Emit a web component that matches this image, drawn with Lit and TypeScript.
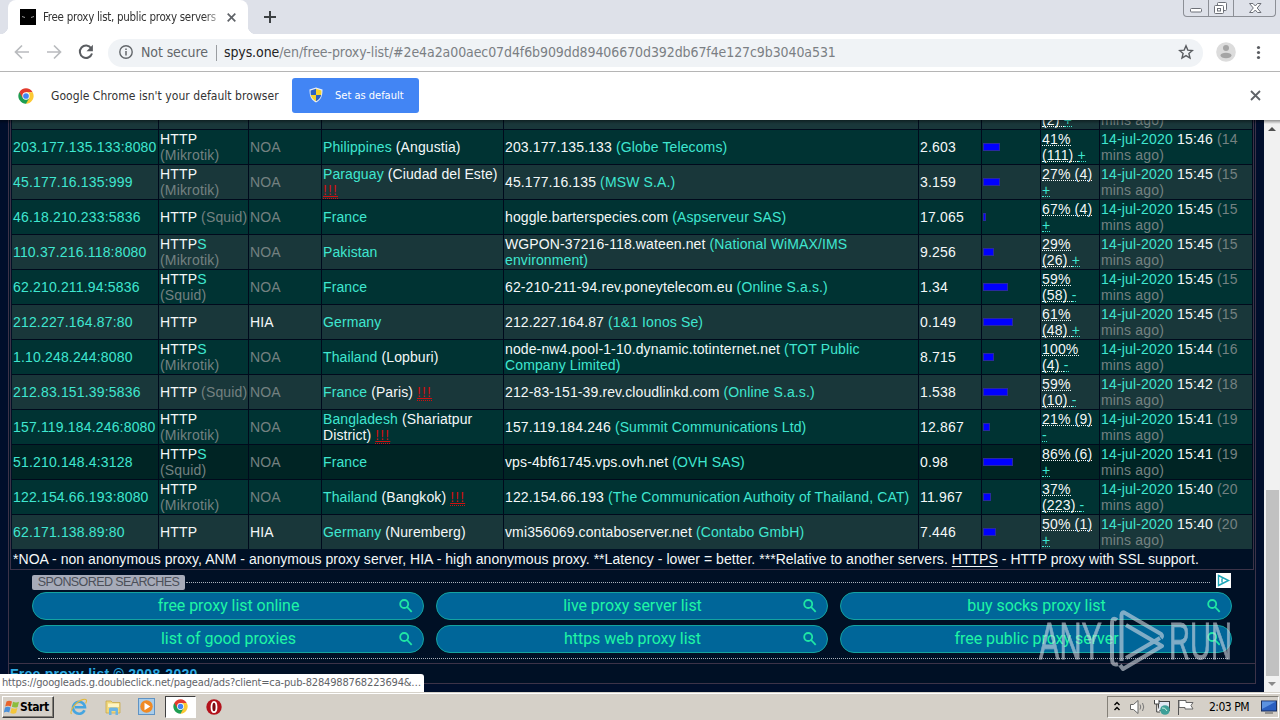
import { LitElement, html, css, svg } from 'lit';
import { customElement, property } from 'lit/decorators.js';
import { styleMap } from 'lit/directives/style-map.js';

type Tone = 'link' | 'text' | 'dim' | 'warn';
type Part = [Tone, string];
type Line = Part[];

interface Proxy {
  shade: 'a' | 'b' | 'c';
  address: string;
  type: Line[];
  anonymity: string;
  country: Line[];
  host: Line[];
  latency: string;
  speed: number;
  uptime: Line[];
  time: string;
  ago: number;
}

const http = (server?: string): Line[] =>
  server ? [[['text', 'HTTP']], [['dim', `(${server})`]]] : [[['text', 'HTTP']]];
const https = (server: string): Line[] => [[['text', 'HTTP'], ['link', 'S']], [['dim', `(${server})`]]];
const squid: Line[] = [[['text', 'HTTP '], ['dim', '(Squid)']]];

const proxies: Proxy[] = [
  {
    shade: 'a', address: '203.177.135.133:8080', type: http('Mikrotik'), anonymity: 'NOA',
    country: [[['link', 'Philippines '], ['text', '(Angustia)']]],
    host: [[['text', '203.177.135.133 '], ['link', '(Globe Telecoms)']]],
    latency: '2.603', speed: 17, uptime: [[['text', '41%']], [['text', '(111) '], ['link', '+']]], time: '15:46', ago: 14,
  },
  {
    shade: 'b', address: '45.177.16.135:999', type: http('Mikrotik'), anonymity: 'NOA',
    country: [[['link', 'Paraguay '], ['text', '(Ciudad del Este)']], [['warn', '!!!']]],
    host: [[['text', '45.177.16.135 '], ['link', '(MSW S.A.)']]],
    latency: '3.159', speed: 17, uptime: [[['text', '27% (4)']], [['link', '+']]], time: '15:45', ago: 15,
  },
  {
    shade: 'a', address: '46.18.210.233:5836', type: squid, anonymity: 'NOA',
    country: [[['link', 'France']]],
    host: [[['text', 'hoggle.barterspecies.com '], ['link', '(Aspserveur SAS)']]],
    latency: '17.065', speed: 3, uptime: [[['text', '67% (4)']], [['link', '+']]], time: '15:45', ago: 15,
  },
  {
    shade: 'b', address: '110.37.216.118:8080', type: https('Mikrotik'), anonymity: 'NOA',
    country: [[['link', 'Pakistan']]],
    host: [[['text', 'WGPON-37216-118.wateen.net '], ['link', '(National WiMAX/IMS']], [['link', 'environment)']]],
    latency: '9.256', speed: 11, uptime: [[['text', '29%']], [['text', '(26) '], ['link', '+']]], time: '15:45', ago: 15,
  },
  {
    shade: 'a', address: '62.210.211.94:5836', type: https('Squid'), anonymity: 'NOA',
    country: [[['link', 'France']]],
    host: [[['text', '62-210-211-94.rev.poneytelecom.eu '], ['link', '(Online S.a.s.)']]],
    latency: '1.34', speed: 25, uptime: [[['text', '59%']], [['text', '(58) '], ['link', '-']]], time: '15:45', ago: 15,
  },
  {
    shade: 'b', address: '212.227.164.87:80', type: http(), anonymity: 'HIA',
    country: [[['link', 'Germany']]],
    host: [[['text', '212.227.164.87 '], ['link', '(1&1 Ionos Se)']]],
    latency: '0.149', speed: 30, uptime: [[['text', '61%']], [['text', '(48) '], ['link', '+']]], time: '15:45', ago: 15,
  },
  {
    shade: 'a', address: '1.10.248.244:8080', type: https('Mikrotik'), anonymity: 'NOA',
    country: [[['link', 'Thailand '], ['text', '(Lopburi)']]],
    host: [[['text', 'node-nw4.pool-1-10.dynamic.totinternet.net '], ['link', '(TOT Public']], [['link', 'Company Limited)']]],
    latency: '8.715', speed: 11, uptime: [[['text', '100%']], [['text', '(4) '], ['link', '-']]], time: '15:44', ago: 16,
  },
  {
    shade: 'b', address: '212.83.151.39:5836', type: squid, anonymity: 'NOA',
    country: [[['link', 'France '], ['text', '(Paris) '], ['warn', '!!!']]],
    host: [[['text', '212-83-151-39.rev.cloudlinkd.com '], ['link', '(Online S.a.s.)']]],
    latency: '1.538', speed: 25, uptime: [[['text', '59%']], [['text', '(10) '], ['link', '-']]], time: '15:42', ago: 18,
  },
  {
    shade: 'a', address: '157.119.184.246:8080', type: http('Mikrotik'), anonymity: 'NOA',
    country: [[['link', 'Bangladesh '], ['text', '(Shariatpur']], [['text', 'District) '], ['warn', '!!!']]],
    host: [[['text', '157.119.184.246 '], ['link', '(Summit Communications Ltd)']]],
    latency: '12.867', speed: 7, uptime: [[['text', '21% (9)']], [['link', '-']]], time: '15:41', ago: 19,
  },
  {
    shade: 'c', address: '51.210.148.4:3128', type: https('Squid'), anonymity: 'NOA',
    country: [[['link', 'France']]],
    host: [[['text', 'vps-4bf61745.vps.ovh.net '], ['link', '(OVH SAS)']]],
    latency: '0.98', speed: 30, uptime: [[['text', '86% (6)']], [['link', '+']]], time: '15:41', ago: 19,
  },
  {
    shade: 'a', address: '122.154.66.193:8080', type: http('Mikrotik'), anonymity: 'NOA',
    country: [[['link', 'Thailand '], ['text', '(Bangkok) '], ['warn', '!!!']]],
    host: [[['text', '122.154.66.193 '], ['link', '(The Communication Authoity of Thailand, CAT)']]],
    latency: '11.967', speed: 8, uptime: [[['text', '37%']], [['text', '(223) '], ['link', '-']]], time: '15:40', ago: 20,
  },
  {
    shade: 'b', address: '62.171.138.89:80', type: http(), anonymity: 'HIA',
    country: [[['link', 'Germany '], ['text', '(Nuremberg)']]],
    host: [[['text', 'vmi356069.contaboserver.net '], ['link', '(Contabo GmbH)']]],
    latency: '7.446', speed: 13, uptime: [[['text', '50% (1)']], [['link', '+']]], time: '15:40', ago: 20,
  },
];

const searches = [
  'free proxy list online',
  'live proxy server list',
  'buy socks proxy list',
  'list of good proxies',
  'https web proxy list',
  'free public proxy server',
];

const chromeLogo = html`
  <svg class="chrome-logo" viewBox="0 0 48 48">
    <circle cx="24" cy="24" r="23" fill="#fff"/>
    <path d="M24 24 4.1 12.5A23 23 0 0 1 43.9 12.5H24Z" fill="#e33b2e"/>
    <path d="M24 24 43.9 12.5A23 23 0 0 1 24 47Z" fill="#fcc934"/>
    <path d="M24 24 24 47A23 23 0 0 1 4.1 12.5Z" fill="#1e9e52"/>
    <path d="M24 12.5H43.9L34 29.7Z" fill="#fcc934"/>
    <path d="M14 29.7 4.1 12.5 24 13Z" fill="#e33b2e"/>
    <path d="M34 29.7 24 47 14 29.7Z" fill="#1e9e52"/>
    <circle cx="24" cy="24" r="11" fill="#fff"/>
    <circle cx="24" cy="24" r="8.6" fill="#4285f4"/>
  </svg>`;

@customElement('browser-chrome')
export class BrowserChrome extends LitElement {
  static styles = css`
    :host {
      display: block;
      height: 120px;
      background: #fff;
      font-family: "DejaVu Sans Condensed", "Noto Sans", sans-serif;
      color: #333;
    }
    svg {
      display: block;
      flex: none;
    }
    .strip {
      display: flex;
      height: 34px;
      padding-left: 8px;
      background: #dee1e9;
    }
    .tab {
      display: flex;
      align-items: center;
      box-sizing: border-box;
      width: 240px;
      padding: 0 10px 0 12px;
      border-radius: 8px 8px 0 0;
      background: #fff;
      position: relative;
    }
    .tab::before,
    .tab::after {
      content: "";
      position: absolute;
      bottom: 0;
      width: 8px;
      height: 8px;
    }
    .tab::before {
      left: -8px;
      background: radial-gradient(circle at 0 0, transparent 8px, #fff 8.5px);
    }
    .tab::after {
      right: -8px;
      background: radial-gradient(circle at 100% 0, transparent 8px, #fff 8.5px);
    }
    .title {
      width: 175px;
      margin: 0 9px 0 7px;
      overflow: hidden;
      white-space: nowrap;
      font-size: 11.5px;
      letter-spacing: -0.29px;
      -webkit-mask-image: linear-gradient(90deg, #000 92%, rgba(0, 0, 0, 0.3));
    }
    .plus {
      margin: 11px 0 0 16px;
    }
    .window-buttons {
      display: flex;
      box-sizing: border-box;
      width: 93px;
      height: 17px;
      margin: 0 4px 0 auto;
      border: 1px solid #8c8f96;
      border-top: 0;
      border-radius: 0 0 4px 4px;
    }
    .toolbar {
      display: flex;
      align-items: center;
      box-sizing: border-box;
      height: 38px;
      padding-left: 13px;
      border-bottom: 1px solid #b5b5b5;
    }
    .nav {
      display: flex;
      gap: 14px;
      margin-right: 13px;
      margin-bottom: 1px;
    }
    .omnibox {
      display: flex;
      align-items: center;
      box-sizing: border-box;
      width: 1095px;
      height: 28px;
      padding: 0 9px 0 10px;
      border-radius: 14px;
      background: #f0f3f6;
      font-size: 14px;
      color: #7b7f84;
      white-space: nowrap;
    }
    .omnibox > * {
      margin-bottom: 2px;
    }
    .secure {
      margin-left: 7px;
      letter-spacing: -0.1px;
      color: #63676b;
    }
    .divider {
      width: 1px;
      height: 16px;
      margin: 0 7px 0 8px;
      background: #9a9da1;
    }
    .url {
      letter-spacing: -0.09px;
    }
    .domain {
      color: #222;
    }
    .star {
      margin-left: auto;
    }
    .infobar {
      display: flex;
      align-items: center;
      height: 48px;
      padding-left: 18px;
      font-size: 12px;
    }
    .infobar .chrome-logo {
      width: 16px;
      height: 16px;
    }
    .message {
      width: 241px;
      margin-left: 17px;
      letter-spacing: 0.05px;
      white-space: nowrap;
    }
    .default {
      display: flex;
      align-items: center;
      box-sizing: border-box;
      width: 127px;
      height: 35px;
      margin-bottom: 2px;
      padding-left: 16px;
      gap: 11px;
      border-radius: 3px;
      background: #4285f4;
      color: #fff;
      font-size: 11px;
      white-space: nowrap;
    }
    .close {
      margin: 0 19px 1px auto;
    }
  `;

  render() {
    return html`
      <div class="strip">
        <div class="tab">
          <svg width="16" height="16" viewBox="0 0 16 16">
            <rect width="16" height="16" fill="#000"/>
            <path d="M2 7.5 5 8.5M14 7.5 11 8.5" stroke="#999" fill="none"/>
          </svg>
          <span class="title">Free proxy list, public proxy servers</span>
          <svg width="9" height="9" viewBox="0 0 9 9"><path d="M.7.7 8.3 8.3M8.3.7.7 8.3" stroke="#5f6368" stroke-width="1.7"/></svg>
        </div>
        <svg class="plus" width="12" height="12" viewBox="0 0 12 12"><path d="M6 0V12M0 6H12" stroke="#3c4043" stroke-width="2"/></svg>
        <div class="window-buttons">
          <svg width="91" height="16" viewBox="0 0 91 16" fill="none" stroke="#6d7078">
            <path d="M24.5 0V16M49.5 0V16" stroke="#8c8f96"/>
            <rect x="6.5" y="8.5" width="11" height="3.5" rx="1" fill="#fff"/>
            <rect x="33.5" y="2.5" width="9" height="8" rx="1" fill="#fff"/>
            <rect x="30.5" y="5.5" width="9" height="8" rx="1" fill="#fff"/>
            <rect x="33.5" y="8.5" width="3" height="2.5"/>
            <path d="M65.5 3.5H69L71.3 6 73.5 3.5H77L73.2 8 77 12.5H73.5L71.3 10 69 12.5H65.5L69.3 8Z" fill="#fff"/>
          </svg>
        </div>
      </div>
      <div class="toolbar">
        <div class="nav">
          <svg width="18" height="18" viewBox="0 0 18 18" fill="none" stroke="#b9bbbe" stroke-width="1.7"><path d="M16 9H3M9 2.5 2.5 9 9 15.5"/></svg>
          <svg width="18" height="18" viewBox="0 0 18 18" fill="none" stroke="#b9bbbe" stroke-width="1.7"><path d="M2 9H15M9 2.5 15.5 9 9 15.5"/></svg>
          <svg width="18" height="18" viewBox="0 0 18 18">
            <path d="M14.2 5.2A6.2 6.2 0 1 0 15 10.5" fill="none" stroke="#5a5d61" stroke-width="2"/>
            <path d="M15.9 1.8V8.2H9.5Z" fill="#5a5d61"/>
          </svg>
        </div>
        <div class="omnibox">
          <svg width="16" height="16" viewBox="0 0 16 16">
            <circle cx="8" cy="8" r="6.2" fill="none" stroke="#63676b" stroke-width="1.4"/>
            <path d="M8 7V11.5M8 4.5V6" stroke="#63676b" stroke-width="1.5"/>
          </svg>
          <span class="secure">Not secure</span>
          <span class="divider"></span>
          <span class="url"><span class="domain">spys.one</span>/en/free-proxy-list/#2e4a2a00aec07d4f6b909dd89406670d392db67f4e127c9b3040a531</span>
          <svg class="star" width="16" height="16" viewBox="0 0 16 16"><path d="M8 1.8 9.8 6.1 14.4 6.5 10.9 9.5 12 14 8 11.6 4 14 5.1 9.5 1.6 6.5 6.2 6.1Z" fill="none" stroke="#5a5d61" stroke-width="1.4"/></svg>
        </div>
        <svg width="77" height="26" viewBox="0 0 77 26">
          <circle cx="23" cy="12" r="9.8" fill="#dcdcdc"/>
          <circle cx="23" cy="8" r="3" fill="#a5a5a5"/>
          <ellipse cx="23" cy="15.5" rx="5.5" ry="2.7" fill="#a5a5a5"/>
          <g fill="#5a5d61"><circle cx="55.5" cy="7.5" r="1.6"/><circle cx="55.5" cy="12.5" r="1.6"/><circle cx="55.5" cy="17.5" r="1.6"/></g>
        </svg>
      </div>
      <div class="infobar">
        ${chromeLogo}
        <span class="message">Google Chrome isn't your default browser</span>
        <div class="default">
          <svg width="16" height="16" viewBox="0 0 16 16">
            <path d="M8 .5 14.5 2.5C14.5 9 13 13 8 15.5 3 13 1.5 9 1.5 2.5Z" fill="#e8eef8"/>
            <path d="M8 1.8V8H2.8Q2.5 5.5 2.6 3.4Z" fill="#2b62c4"/>
            <path d="M8 1.8 13.4 3.4Q13.5 6 13.1 8H8Z" fill="#f6d32c"/>
            <path d="M2.8 8H8V14.3Q3.7 12 2.8 8Z" fill="#f6d32c"/>
            <path d="M13.2 8H8V14.3Q12.3 12 13.2 8Z" fill="#2b62c4"/>
          </svg>
          <span>Set as default</span>
        </div>
        <svg class="close" width="11" height="11" viewBox="0 0 11 11"><path d="M1 1 10 10M10 1 1 10" stroke="#5f6368" stroke-width="1.8"/></svg>
      </div>
    `;
  }
}

@customElement('proxy-row')
export class ProxyRow extends LitElement {
  static properties = {
    proxy: { attribute: false },
  };

  declare proxy: Proxy;

  static styles = css`
    :host {
      display: grid;
      grid-template-columns: 146px 89px 72px 181px 414px 62px 58px 58px 152px;
      gap: 1px;
      height: 34px;
      margin-bottom: 1px;
      line-height: 16px;
      letter-spacing: 0.17px;
      white-space: nowrap;
    }
    .cell {
      display: flex;
      flex-direction: column;
      justify-content: center;
      padding-left: 1px;
      white-space: pre;
    }
    .country {
      letter-spacing: 0.1px;
    }
    .host {
      letter-spacing: 0.12px;
    }
    .a { background: #003333; }
    .b { background: #19373a; }
    .c { background: #002424; }
    .link { color: #3fe6d0; }
    .text { color: #f4f8f8; }
    .dim { color: #748181; }
    .warn {
      color: #d01010;
      border-bottom: 1px dotted #d01010;
      text-decoration: underline;
      line-height: 13px;
      letter-spacing: 1.1px;
    }
    .uptime .link,
    .uptime .text {
      display: inline-block;
      height: 14px;
      border-bottom: 1px dotted;
    }
    .bar {
      box-sizing: border-box;
      height: 8px;
      border: 1px solid #2a2a9e;
      background: #0000ff;
    }
  `;

  private lines(lines: Line[]) {
    return lines.map(
      line => html`<div>${line.map(([tone, text]) => html`<span class=${tone}>${text}</span>`)}</div>`
    );
  }

  render() {
    const p = this.proxy;
    return html`
      <div class="cell ${p.shade}"><span class="link">${p.address}</span></div>
      <div class="cell ${p.shade}">${this.lines(p.type)}</div>
      <div class="cell ${p.shade}"><span class=${p.anonymity === 'HIA' ? 'text' : 'dim'}>${p.anonymity}</span></div>
      <div class="cell country ${p.shade}">${this.lines(p.country)}</div>
      <div class="cell host ${p.shade}">${this.lines(p.host)}</div>
      <div class="cell ${p.shade}"><span class="text">${p.latency}</span></div>
      <div class="cell ${p.shade}">${p.speed
        ? html`<div class="bar" style=${styleMap({ width: `${p.speed}px` })}></div>`
        : ''}</div>
      <div class="cell uptime ${p.shade}">${this.lines(p.uptime)}</div>
      <div class="cell ${p.shade}">${this.lines([
        [['link', '14-jul-2020 '], ['text', p.time], ['dim', ` (${p.ago}`]],
        [['dim', 'mins ago)']],
      ])}</div>
    `;
  }
}

@customElement('sponsored-searches')
export class SponsoredSearches extends LitElement {
  static styles = css`
    :host {
      display: block;
      width: 1200px;
      margin-left: 23px;
    }
    .head {
      display: flex;
      align-items: center;
      width: 1199px;
      height: 18px;
      margin-bottom: 2px;
    }
    .label {
      width: 153px;
      height: 15px;
      margin-top: 2px;
      border-radius: 2px;
      background: #a6abb9;
      color: #4b4f58;
      font-size: 12.5px;
      letter-spacing: -0.6px;
      line-height: 15px;
      text-align: center;
      white-space: nowrap;
    }
    .head svg {
      display: block;
      margin-bottom: 2px;
    }
    .dots {
      flex: 1;
      margin: 2px 6px 0 1px;
      border-top: 1px dotted #a9b2bd;
    }
    .grid {
      display: grid;
      grid-template-columns: repeat(3, 392px);
      gap: 5px 12px;
    }
    .search {
      display: flex;
      align-items: center;
      box-sizing: border-box;
      height: 28px;
      padding: 0 9px 0 0;
      border: 1px solid #14a3a0;
      border-radius: 14px;
      background: #006699;
      color: #1ff5a5;
      font-family: Roboto, sans-serif;
      font-size: 16px;
      letter-spacing: -0.05px;
    }
    .search span {
      flex: 1;
      margin-bottom: 1px;
      padding-left: 26px;
      text-align: center;
    }
    .end {
      margin: 5px 4px 0 6px;
      border-top: 1px dotted #a9b2bd;
    }
  `;

  render() {
    return html`
      <div class="head">
        <div class="label">SPONSORED SEARCHES</div>
        <div class="dots"></div>
        <svg width="15" height="15" viewBox="0 0 15 15">
          <rect width="15" height="15" fill="#fff"/>
          <path d="M2.5 2.5 12.5 7.5 2.5 12.5ZM6 5.5V9.5" fill="none" stroke="#1aa5b8" stroke-width="1.4"/>
        </svg>
      </div>
      <div class="grid">
        ${searches.map(
          text => html`<div class="search"><span>${text}</span>
            <svg width="16" height="16" viewBox="0 0 16 16" fill="none" stroke="#1fe6a5" stroke-width="1.8">
              <circle cx="6.2" cy="6" r="4"/><path d="M9.1 9 13.7 13.8"/>
            </svg></div>`
        )}
      </div>
      <div class="end"></div>
    `;
  }
}

@customElement('task-bar')
export class TaskBar extends LitElement {
  static styles = css`
    :host {
      display: flex;
      align-items: center;
      box-sizing: border-box;
      height: 28px;
      padding: 0 1px 0 2px;
      border-top: 1px solid #d6d2ca;
      background: #d5d0c8;
      box-shadow: inset 0 1px #fff;
      font-family: "DejaVu Sans Condensed", sans-serif;
      font-size: 12px;
      color: #000;
    }
    svg {
      display: block;
      flex: none;
    }
    .start {
      display: flex;
      align-items: center;
      box-sizing: border-box;
      width: 52px;
      height: 22px;
      padding-left: 1px;
      border: 1px solid;
      border-color: #fff #404040 #404040 #fff;
      box-shadow: inset -1px -1px #848078;
      font-weight: bold;
      letter-spacing: -0.4px;
    }
    .quick {
      display: flex;
      align-items: center;
      margin-left: 16px;
      gap: 15px;
    }
    .active {
      display: flex;
      align-items: center;
      justify-content: center;
      box-sizing: border-box;
      width: 31px;
      height: 22px;
      margin: 0 -5px;
      border: 1px solid;
      border-color: #404040 #fff #fff #404040;
      background: #fff;
    }
    .chrome-logo {
      width: 15px;
      height: 15px;
    }
    .tray {
      display: flex;
      align-items: center;
      box-sizing: border-box;
      width: 172px;
      height: 22px;
      margin-left: auto;
      padding: 0 1px 0 5px;
      border: 1px solid;
      border-color: #848078 #fff #fff #848078;
    }
    .clock {
      margin-left: 14px;
      letter-spacing: -0.5px;
      white-space: nowrap;
    }
    .desktop {
      margin-left: auto;
    }
  `;

  render() {
    return html`
      <div class="start">
        <svg width="16" height="16" viewBox="0 0 16 16">
          <path d="M2.5 2.5Q5 .8 8 2.5L6.8 7.5Q4 6 1.2 7.5Z" fill="#e8642c"/>
          <path d="M9 2.8Q12 4.3 15 2.8L13.7 8Q11 9.3 7.9 7.8Z" fill="#8bbd3d"/>
          <path d="M1 8.5Q3.8 7 6.5 8.5L5.2 13.5Q2.5 12-.2 13.5Z" fill="#4a90d9"/>
          <path d="M7.6 8.9Q10.5 10.3 13.4 9L12.1 14Q9.2 15.3 6.3 13.9Z" fill="#f4c63a"/>
        </svg>
        <span>Start</span>
      </div>
      <div class="quick">
        <svg width="18" height="18" viewBox="0 0 18 18">
          <path d="M14.5 12.2A6 6 0 1 1 15 9.3H5" fill="none" stroke="#45a5e0" stroke-width="2.6"/>
          <path d="M1.5 16C-1 13 6 3.5 12.5 1.6 16.5.5 17.5 2 15.6 5.5" fill="none" stroke="#e2b93c" stroke-width="1.1"/>
        </svg>
        <svg width="20" height="18" viewBox="0 0 20 18">
          <path d="M3 3H8L9.5 4.5H17V15H3Z" fill="#f0d77c" stroke="#c9a94b" stroke-width=".8"/>
          <path d="M5 5.5H16V9H5Z" fill="#fff4c2"/>
          <path d="M6 17V11Q6 9.5 7.5 9.5H13.5Q15 9.5 15 11V17H12.5V13H8.5V17Z" fill="#6bb4e4"/>
        </svg>
        <svg width="17" height="17" viewBox="0 0 17 17">
          <rect x=".5" y=".5" width="16" height="16" fill="#a9cdea" stroke="#5f93c4"/>
          <circle cx="8.5" cy="8.5" r="6.2" fill="#f08a24"/>
          <path d="M6.5 4.8 12.3 8.5 6.5 12.2Z" fill="#fff"/>
        </svg>
        <div class="active">${chromeLogo}</div>
        <svg width="16" height="16" viewBox="0 0 16 16">
          <circle cx="8" cy="8" r="7.7" fill="#b3121c"/>
          <ellipse cx="8" cy="8" rx="2.5" ry="5.2" fill="#7d0810" stroke="#fff" stroke-width="1.8"/>
        </svg>
      </div>
      <div class="tray">
        <svg width="82" height="18" viewBox="0 0 82 18" fill="none">
          <path d="M1.5 7 4 4.5 6.5 7M1.5 12 4 9.5 6.5 12" stroke="#000" stroke-width="1.4"/>
          <path d="M17.5 6.5H20.5L25 2.5V15.5L20.5 11.5H17.5Z" fill="#fff" stroke="#666"/>
          <path d="M27 6.5Q28.5 9 27 11.5M29.5 5Q32 9 29.5 13" stroke="#777"/>
          <rect x="45.5" y="3.5" width="11" height="9" fill="#dfe8f2" stroke="#444"/>
          <circle cx="52" cy="12" r="4.8" fill="#3d9f98"/><path d="M49 10Q52 9 54 13" stroke="#c9f0dc"/>
          <path d="M41.5 2V6H46V2M43.7 6V14H47" stroke="#444" fill="#fff"/>
          <path d="M65.5 2V17" stroke="#555"/>
          <path d="M66 2.5H73V4.5H80L78 7.5 80 11H72V9.5H66Z" fill="#fff" stroke="#666"/>
        </svg>
        <span class="clock">2:03 PM</span>
        <svg class="desktop" width="16" height="18" viewBox="0 0 16 18">
          <rect x=".5" y="3" width="15" height="10" fill="#2a5fc0" stroke="#1b2f5c"/>
          <path d="M1 3.5H15L1 11Z" fill="#5c92e0"/>
          <path d="M4 15H12" stroke="#555"/>
        </svg>
      </div>
    `;
  }
}

@customElement('app-root')
export class AppRoot extends LitElement {
  static styles = css`
    :host {
      display: block;
      position: relative;
      width: 1280px;
      height: 720px;
      overflow: hidden;
      font-family: "Liberation Sans", Arial, sans-serif;
      font-size: 14px;
    }
    .viewport {
      display: flex;
      height: 572px;
      position: relative;
      overflow: hidden;
      background: #000e2b;
    }
    .viewport::before {
      content: "";
      position: absolute;
      left: 0;
      right: 0;
      top: 0;
      height: 4px;
      background: linear-gradient(rgba(0, 0, 0, 0.4), transparent);
    }
    .page {
      box-sizing: border-box;
      width: 1248px;
      height: 564px;
      margin: 0 8px;
      border: 1px solid #3c3348;
      border-top: 0;
      background: #001025;
    }
    .table {
      box-sizing: border-box;
      height: 450px;
      margin: 0 1px;
      padding: 0 0 0 1px;
      border: 1px solid #3c3348;
      border-top: 0;
      overflow: hidden;
      background: #001025;
    }
    .rows {
      margin-top: -25px;
      background: #000a1c;
    }
    .notes {
      padding-left: 1px;
      color: #f4f8f8;
      line-height: 19px;
      letter-spacing: 0.035px;
      white-space: nowrap;
    }
    .notes u {
      text-underline-offset: 2px;
    }
    sponsored-searches {
      margin-top: 2px;
    }
    .footer {
      margin-top: 4px;
      padding-left: 1px;
      border-top: 1px solid #3c3348;
      color: #2da9e0;
      font-weight: bold;
      letter-spacing: 0.25px;
      line-height: 20px;
    }
    .scrollbar {
      display: flex;
      flex-direction: column;
      align-items: center;
      width: 16px;
      background: #f1f1f1;
    }
    .thumb {
      width: 13px;
      height: 186px;
      margin: 353px 0 3px;
      background: #c1c1c1;
    }
    .status {
      position: absolute;
      left: 0;
      bottom: 28px;
      box-sizing: border-box;
      width: 424px;
      height: 18px;
      padding-left: 2px;
      border-radius: 0 3px 0 0;
      background: #fff;
      color: #5f6368;
      font-family: "DejaVu Sans Condensed", sans-serif;
      font-size: 11px;
      letter-spacing: -0.165px;
      line-height: 18px;
      white-space: nowrap;
    }
    .watermark {
      position: absolute;
      left: 1034px;
      top: 604px;
      opacity: 0.6;
    }
  `;

  @property({ attribute: false }) proxies: Proxy[] = proxies;

  // row scrolled partly above the viewport, only its second lines show
  private previous: Proxy = {
    ...proxies[1],
    address: '', type: [], anonymity: '', country: [], host: [], latency: '', speed: 0,
    uptime: [[['text', ' ']], [['text', '(2) '], ['link', '+']]],
    ago: 14,
  };

  render() {
    return html`
      <browser-chrome></browser-chrome>
      <div class="viewport">
        <div class="page">
          <div class="table">
            <div class="rows">
              ${[this.previous, ...this.proxies].map(p => html`<proxy-row .proxy=${p}></proxy-row>`)}
            </div>
            <div class="notes">*NOA - non anonymous proxy, ANM - anonymous proxy server, HIA - high anonymous proxy. **Latency - lower = better. ***Relative to another servers. <u>HTTPS</u> - HTTP proxy with SSL support.</div>
          </div>
          <sponsored-searches></sponsored-searches>
          <div class="footer">Free proxy list © 2008-2020</div>
        </div>
        <div class="scrollbar">
          <svg width="16" height="17" viewBox="0 0 16 17"><path d="M4 11 8 7 12 11Z" fill="#505050"/></svg>
          <div class="thumb"></div>
          <svg width="16" height="13" viewBox="0 0 16 13"><path d="M4 3H12L8 7Z" fill="#8a8a8a"/></svg>
        </div>
      </div>
      <div class="status">https://googleads.g.doubleclick.net/pagead/ads?client=ca-pub-8284988768223694&…</div>
      <task-bar></task-bar>
      <svg class="watermark" width="204" height="74" viewBox="0 0 204 74">
        ${svg`
          <g fill="#d5dbe4" stroke="#d5dbe4" stroke-width="0.8" font-size="52">
            <text x="5" y="55" textLength="63" lengthAdjust="spacingAndGlyphs">ANY</text>
            <text x="135" y="55" textLength="63" lengthAdjust="spacingAndGlyphs">RUN</text>
          </g>
          <path d="M83 16Q78 12 78 20V55Q78 62 84 60M87.5 57V11Q88 7 91 9L127 30Q129 32 127 34M92 21 128 42 89 65 86 61M92 54 126 34" fill="none" stroke="#d5dbe4" stroke-width="4" stroke-linejoin="round"/>
        `}
      </svg>
    `;
  }
}
